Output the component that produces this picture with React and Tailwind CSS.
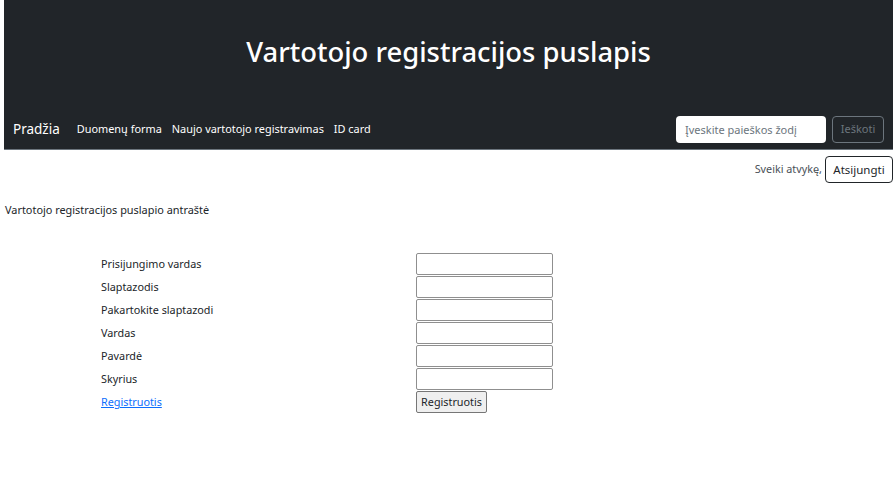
import React from 'react';

const fields = [
  'Prisijungimo vardas',
  'Slaptazodis',
  'Pakartokite slaptazodi',
  'Vardas',
  'Pavardė',
  'Skyrius',
];

export default function App() {
  return (
    <div className="min-h-[500px] bg-white pl-[4px] pr-[2px] text-[#212529] font-['Noto_Sans',sans-serif]">
      {/* Header */}
      <header className="bg-[#212529] border-b border-[#6c757d]">
        <div className="h-[110px] pb-[6px] flex items-center justify-center">
          <h1 className="text-[27.4px] font-medium text-white">Vartotojo registracijos puslapis</h1>
        </div>
        <nav className="h-[39px] flex items-center pl-[9px] pr-[9px]">
          <a className="text-[13.5px] text-white mr-[17px]">Pradžia</a>
          <div className="flex items-center gap-[10px] text-[10.9px] text-white">
            <a>Duomenų forma</a>
            <a>Naujo vartotojo registravimas</a>
            <a>ID card</a>
          </div>
          <form className="ml-auto flex items-center gap-[6px]">
            <input
              className="w-[150px] h-[27px] rounded-[4px] bg-white px-[9px] text-[11px] outline-none placeholder:text-[#6c757d]"
              placeholder="Įveskite paieškos žodį"
            />
            <button type="button" className="w-[52px] h-[27px] rounded-[4px] border border-[#6c757d] text-[11px] text-[#6c757d]">
              Ieškoti
            </button>
          </form>
        </nav>
      </header>

      {/* User bar */}
      <div className="flex items-center justify-end gap-[3px] mt-[6px]">
        <span className="text-[10.8px] text-[#495057]">Sveiki atvykę,</span>
        <button type="button" className="w-[68px] h-[27px] rounded-[4px] border border-[#212529] text-[11.5px]">
          Atsijungti
        </button>
      </div>

      <p className="mt-[19px] pl-[1px] text-[10.9px]">Vartotojo registracijos puslapio antraštė</p>

      {/* Registration form */}
      <table className="mt-[34px] ml-[95px] border-separate border-spacing-[1px] text-[10.8px]">
        <tbody>
          {fields.map((f) => (
            <tr key={f}>
              <td className="w-[315px] pl-[1px]">{f}</td>
              <td>
                <input className="block w-[137px] h-[22px] border border-[#8f8f8f] rounded-[2px] bg-white" />
              </td>
            </tr>
          ))}
          <tr>
            <td className="pl-[1px]">
              <a href="#" className="text-[#0d6efd] underline">Registruotis</a>
            </td>
            <td>
              <button type="button" className="w-[71px] h-[22px] border border-[#767676] rounded-[2px] bg-[#efefef] text-[10.8px]">
                Registruotis
              </button>
            </td>
          </tr>
        </tbody>
      </table>
    </div>
  );
}
